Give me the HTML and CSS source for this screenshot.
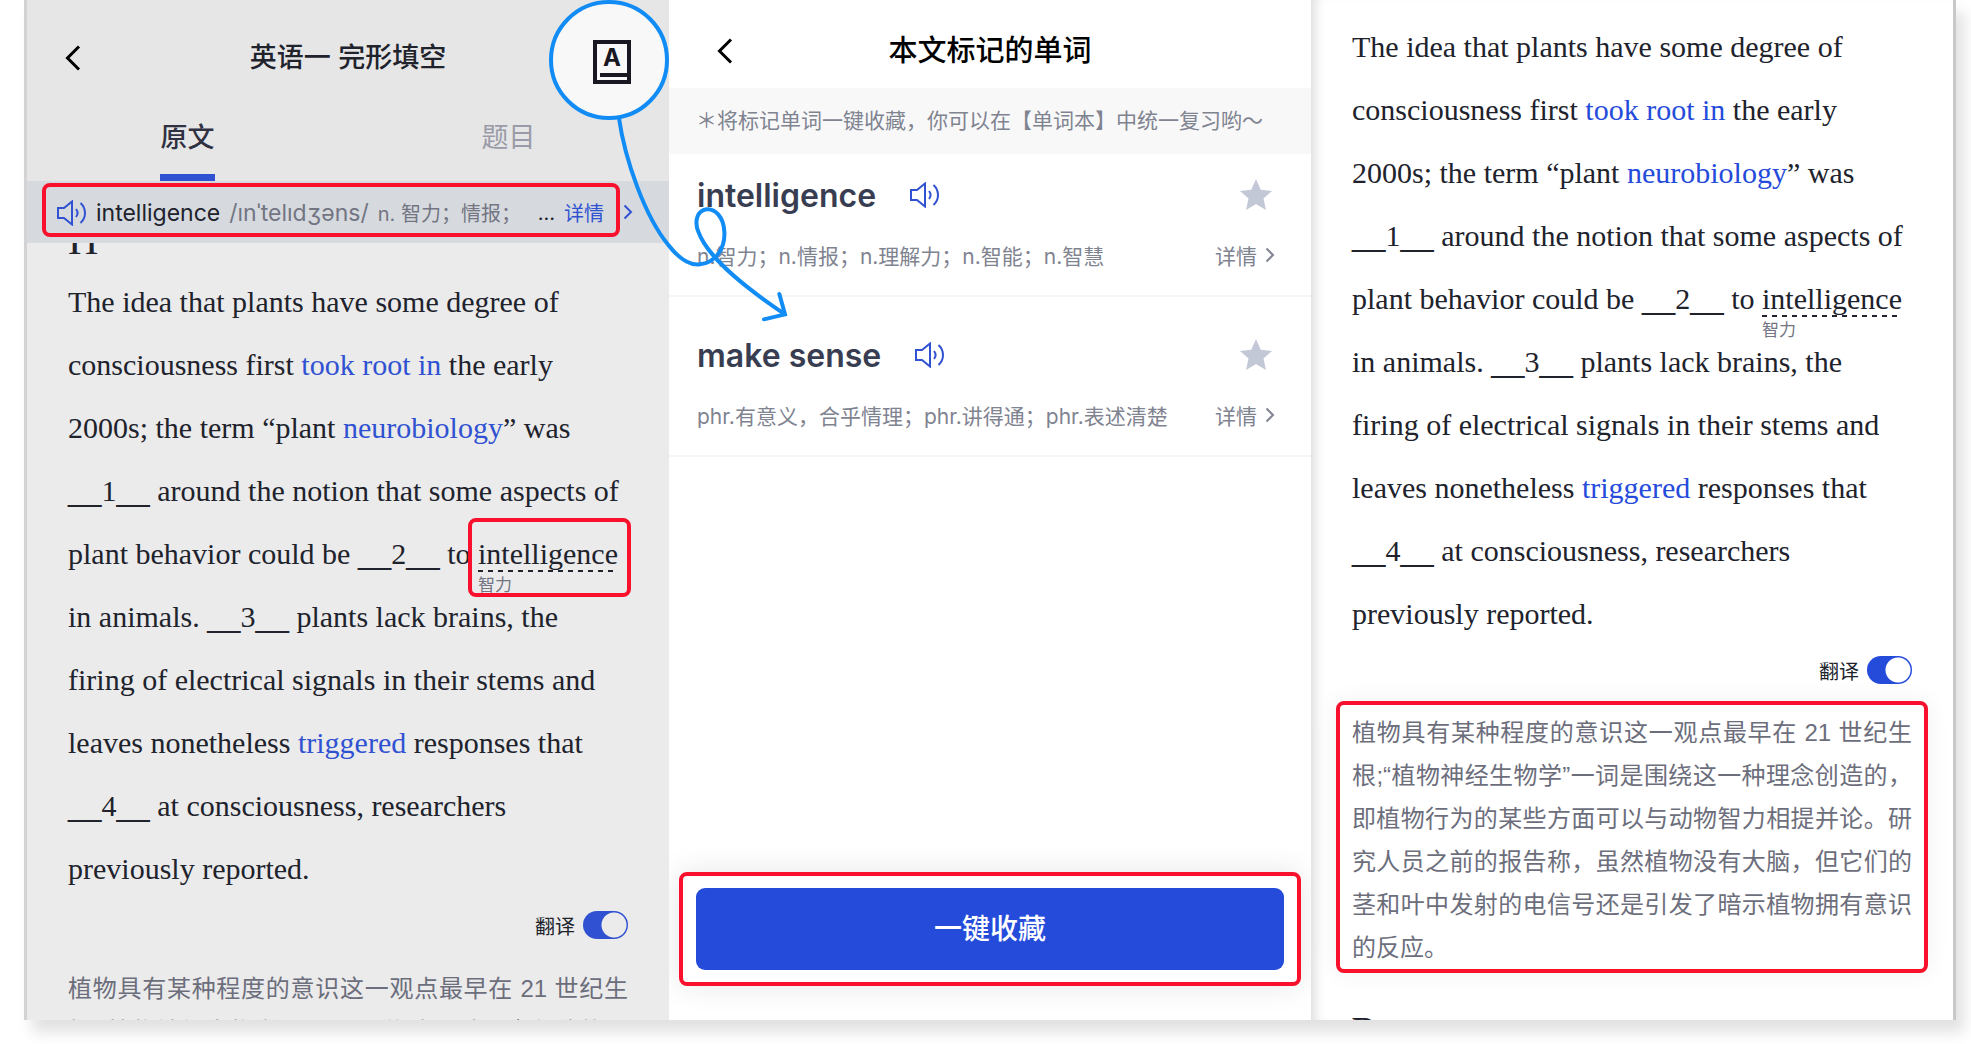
FILE: index.html
```html
<!DOCTYPE html>
<html lang="zh-CN">
<head>
  <meta charset="UTF-8" />
  <meta name="viewport" content="width=device-width, initial-scale=1.0"/>
  <title>英语一 完形填空</title>
  <link rel="stylesheet" href="styles.css">
</head>
<body>
  <!-- Shared icons -->
  <svg class="sprite" aria-hidden="true">
    <symbol id="back" viewBox="0 0 16 26"><path d="M14 1.500 2.500 13 14 24.500"/></symbol>
    <symbol id="next" viewBox="0 0 10 16"><path d="M1.500 1.500 8 8l-6.500 6.500"/></symbol>
    <symbol id="sound" viewBox="0 0 30 26"><path d="M1 8h6l8-6.500v23L7 18H1zM19 9c2 2.500 2 5.500 0 8M23.500 3c6 5.500 6 14.500 0 20"/></symbol>
    <symbol id="star" viewBox="0 0 32 32"><path d="m16 0 4.800 10.800L32 12l-8.500 7.600L26 31l-10-6-10 6 2.500-11.400L0 12l11.200-1.200z"/></symbol>
  </svg>

  <main class="board">
    <section class="panel reader">
      <header class="reader-header">
        <button class="icon-btn back" aria-label="返回"><svg><use href="#back"/></svg></button>
        <h1>英语一 完形填空</h1>
        <button class="book" aria-label="单词本">
          <svg viewBox="0 0 38 44">
            <path d="M2 2h34v40H2zM7 35h29"/>
            <text x="19" y="26">A</text>
          </svg>
        </button>
      </header>
      <nav class="tabs">
        <a class="active" href="#article">原文</a>
        <a href="#questions">题目</a>
      </nav>
      <div class="word-bar">
        <div class="frame word-frame">
          <button class="icon-btn sound" aria-label="发音"><svg><use href="#sound"/></svg></button>
          <span class="word">intelligence</span>
          <span class="phonetic">/ınˈtelıdʒəns/</span>
          <span class="meaning">n. 智力；情报；</span>
          <span class="more">…</span>
          <a href="#detail">详情</a>
        </div>
        <svg class="next"><use href="#next"/></svg>
      </div>
      <div class="scroll" id="article">
        <h2 class="cut-heading">H</h2>
        <p class="passage">The idea that plants have some degree of<br>
          consciousness first <a href="#w1">took root in</a> the early<br>
          2000s; the term “plant <a href="#w2">neurobiology</a>” was<br>
          <span class="blank">__</span>1<span class="blank">__</span> around the notion that some aspects of<br>
          plant behavior could be <span class="blank">__</span>2<span class="blank">__</span> to <span class="marked boxed">intelligence<small>智力</small></span><br>
          in animals. <span class="blank">__</span>3<span class="blank">__</span> plants lack brains, the<br>
          firing of electrical signals in their stems and<br>
          leaves nonetheless <a href="#w3">triggered</a> responses that<br>
          <span class="blank">__</span>4<span class="blank">__</span> at consciousness, researchers<br>
          previously reported.</p>
        <label class="switch">翻译 <input type="checkbox" checked></label>
        <p class="translation">植物具有某种程度的意识这一观点最早在 21 世纪生根;“植物神经生物学”一词是围绕这一种理念创造的，即植物行为的某些方面可以与动物智力相提并论。</p>
      </div>
      <svg class="arrow" viewBox="0 0 810 1020" aria-hidden="true">
        <path d="M237 355C255 480 315 650 385 735C420 780 450 797 480 793C530 788 556 740 553 695C551 650 525 626 500 628C470 632 463 665 475 695C500 765 590 845 735 943M718 882 735 943 672 958"/>
      </svg>
    </section>

    <section class="panel words">
      <header class="words-header">
        <button class="icon-btn back" aria-label="返回"><svg><use href="#back"/></svg></button>
        <h1>本文标记的单词</h1>
      </header>
      <p class="tip">＊将标记单词一键收藏，你可以在【单词本】中统一复习哟～</p>
      <ul class="word-list">
        <li>
          <div class="row">
            <h2>intelligence</h2>
            <button class="icon-btn sound" aria-label="发音"><svg><use href="#sound"/></svg></button>
            <button class="icon-btn star" aria-label="收藏"><svg><use href="#star"/></svg></button>
          </div>
          <div class="row">
            <p>n.智力；n.情报；n.理解力；n.智能；n.智慧</p>
            <a class="detail" href="#d1">详情 <svg class="next"><use href="#next"/></svg></a>
          </div>
        </li>
        <li>
          <div class="row">
            <h2>make sense</h2>
            <button class="icon-btn sound" aria-label="发音"><svg><use href="#sound"/></svg></button>
            <button class="icon-btn star" aria-label="收藏"><svg><use href="#star"/></svg></button>
          </div>
          <div class="row">
            <p>phr.有意义，合乎情理；phr.讲得通；phr.表述清楚</p>
            <a class="detail" href="#d2">详情 <svg class="next"><use href="#next"/></svg></a>
          </div>
        </li>
      </ul>
      <div class="frame collect-frame">
        <button class="collect">一键收藏</button>
      </div>
    </section>

    <section class="panel result">
      <div class="scroll">
        <p class="passage">The idea that plants have some degree of<br>
          consciousness first <a href="#w1">took root in</a> the early<br>
          2000s; the term “plant <a href="#w2">neurobiology</a>” was<br>
          <span class="blank">__</span>1<span class="blank">__</span> around the notion that some aspects of<br>
          plant behavior could be <span class="blank">__</span>2<span class="blank">__</span> to <span class="marked">intelligence<small>智力</small></span><br>
          in animals. <span class="blank">__</span>3<span class="blank">__</span> plants lack brains, the<br>
          firing of electrical signals in their stems and<br>
          leaves nonetheless <a href="#w3">triggered</a> responses that<br>
          <span class="blank">__</span>4<span class="blank">__</span> at consciousness, researchers<br>
          previously reported.</p>
        <label class="switch">翻译 <input type="checkbox" checked></label>
        <div class="frame translation-frame">
          <p class="translation">植物具有某种程度的意识这一观点最早在 21 世纪生根;“植物神经生物学”一词是围绕这一种理念创造的，即植物行为的某些方面可以与动物智力相提并论。研究人员之前的报告称，虽然植物没有大脑，但它们的茎和叶中发射的电信号还是引发了暗示植物拥有意识的反应。</p>
        </div>
        <h2 class="next-heading">B</h2>
      </div>
    </section>
  </main>
</body>
</html>
```

FILE: styles.css
```css
* {
  box-sizing: border-box;
}

body {
  margin: 0;
  height: 100vh;
  padding: 0 15px 24px 24px;
  overflow: hidden;
  background: #fff;
  color: #20222c;
  font-family: "Liberation Sans", "Noto Sans CJK SC", sans-serif;
}

h1, h2, p, ul {
  margin: 0;
  padding: 0;
}

a {
  color: #254bdb;
  text-decoration: none;
}

button {
  border: 0;
  padding: 0;
  background: none;
  font-family: inherit;
  cursor: pointer;
}

svg {
  display: block;
  fill: none;
  stroke: currentColor;
}

.sprite {
  position: absolute;
  width: 0;
  height: 0;
}

.board {
  height: 100%;
  display: grid;
  grid-template-columns: 645fr 642fr 645fr;
  box-shadow: 8px 12px 14px rgba(0, 0, 0, 0.12);
}

.panel {
  position: relative;
  min-width: 0;
  min-height: 0;
  display: flex;
  flex-direction: column;
  background: #fff;
}

.reader {
  z-index: 1;
  border-left: 3px solid #d3d3d4;
  background: #ebebeb;
}

.result {
  border-right: 3px solid #c8c8c8;
  box-shadow: inset 12px 0 12px -8px rgba(0, 0, 0, 0.14);
}

.frame {
  border: 4px solid #f8102c;
  border-radius: 8px;
}

/* Headers */
h1 {
  font-size: 27px;
  font-weight: 500;
  line-height: 36px;
  text-align: center;
}

.back svg {
  width: 16px;
  height: 26px;
  stroke-width: 3;
}

.reader-header {
  height: 115px;
  display: grid;
  grid-template-columns: 120px 1fr 120px;
  grid-template-rows: 115px;
  align-items: center;
  background: #e6e6e6;
}

.back {
  padding-left: 38px;
  justify-self: start;
}

.words-header .back {
  padding-left: 48px;
}

.book {
  position: relative;
  z-index: 1;
  align-self: start;
  width: 120px;
  height: 120px;
  padding: 4px 0 0 6px;
  display: grid;
  place-items: center;
  border: 4px solid #128cf5;
  border-radius: 50%;
  background: #f8f8f9;
}

.book svg {
  width: 38px;
  height: 44px;
  stroke: #181722;
  stroke-width: 4;
}

.book text {
  fill: #181722;
  stroke: none;
  font-family: Inter, sans-serif;
  font-size: 24px;
  font-weight: 700;
  text-anchor: middle;
}

.words-header {
  height: 88px;
  padding-top: 13px;
  display: grid;
  grid-template-columns: 120px 1fr 120px;
  align-items: center;
  color: #000;
}

.words-header h1 {
  font-size: 29px;
}

.tabs {
  height: 66px;
  display: flex;
  background: #e6e6e6;
}

.tabs a {
  flex: 1;
  display: flex;
  flex-direction: column;
  align-items: center;
  justify-content: space-between;
  font-size: 27px;
  line-height: 46px;
  color: #9a9ba8;
}

.tabs .active {
  color: #303142;
  font-weight: 500;
}

.tabs .active::after {
  content: "";
  width: 55px;
  height: 7px;
  background: #3052d2;
}

/* Word bar */
.word-bar {
  height: 62px;
  padding: 2px 36px 6px 15px;
  display: flex;
  align-items: center;
  background: #d6dade;
  color: #3052d2;
}

.word-frame {
  flex: 1;
  height: 54px;
  padding: 5px 12px 0 11px;
  display: flex;
  align-items: center;
  gap: 9px;
  font-family: Inter, "Noto Sans CJK SC", sans-serif;
  font-size: 20px;
  white-space: nowrap;
  color: #737583;
}

.word-frame .word {
  font-size: 23px;
  color: #20222c;
}

.word-frame .phonetic {
  font-size: 23px;
}

.word-frame .more {
  color: #20222c;
  margin-left: auto;
}

.word-frame a {
  color: #3052d2;
}

.word-bar .next {
  margin: 4px 0 0 3px;
}

.sound {
  color: #3052d2;
}

.sound svg {
  width: 30px;
  height: 26px;
  stroke-width: 2;
}

.next {
  width: 10px;
  height: 16px;
  stroke-width: 2;
}

/* Article */
.scroll {
  flex: 1;
  min-height: 0;
  overflow: hidden;
  padding: 0 41px;
}

.cut-heading {
  height: 30px;
  margin-top: -3px;
  font-family: "Liberation Serif", serif;
  font-size: 42px;
  font-weight: 400;
  line-height: 0;
}

.passage {
  padding-bottom: 3px;
  font-family: "Liberation Serif", "Noto Sans CJK SC", serif;
  font-size: 30px;
  line-height: 63px;
  white-space: nowrap;
}

.reader .passage a {
  color: #3052d2;
}

.blank {
  font-family: "Liberation Sans", sans-serif;
}

.marked {
  position: relative;
  display: inline-block;
  line-height: 36px;
  background: repeating-linear-gradient(90deg, #20222c 0 5px, transparent 5px 10px) left bottom / 100% 2px no-repeat;
}

.marked small {
  position: absolute;
  left: 0;
  top: 36px;
  font-family: "Noto Sans CJK SC", sans-serif;
  font-size: 17px;
  line-height: 24px;
  color: #737583;
}

.boxed::after {
  content: "";
  position: absolute;
  inset: -18px -13px -25px -10px;
  border: 4px solid #f8102c;
  border-radius: 8px;
}

.switch {
  height: 44px;
  display: flex;
  align-items: center;
  justify-content: flex-end;
  gap: 8px;
  font-size: 20px;
}

.switch input {
  appearance: none;
  width: 45px;
  height: 28px;
  margin: 0;
  border-radius: 14px;
  background: radial-gradient(circle at 31px 14px, #fff 12px, #254bdb 13px);
}

.reader .switch input {
  background: radial-gradient(circle at 31px 14px, #ebebeb 12px, #3052d2 13px);
}

.translation {
  font-size: 24px;
  line-height: 43px;
  text-align: justify;
  color: #6c6e7c;
}

.reader .translation {
  margin-top: 20px;
}

.result .scroll {
  padding: 15px 41px 0;
}

.translation-frame {
  margin: 9px -16px 0;
  padding: 6px 12px 0;
  box-shadow: 0 0 24px rgba(0, 0, 0, 0.06);
}

.next-heading {
  margin-top: 39px;
  font-family: "Liberation Serif", serif;
  font-size: 34px;
  line-height: 34px;
}

/* Marked words */
.tip {
  height: 66px;
  padding: 0 27px;
  background: #f8f8f9;
  color: #808390;
  font-size: 21px;
  line-height: 66px;
  white-space: nowrap;
}

.word-list {
  flex: 1;
  list-style: none;
}

.word-list li {
  height: 160px;
  padding: 36px 36px 0 28px;
  border-bottom: 2px solid #f6f6f7;
}

.word-list li:first-child {
  height: 143px;
  padding-top: 19px;
}

.row {
  display: flex;
  align-items: center;
  justify-content: space-between;
  height: 44px;
  white-space: nowrap;
}

.row + .row {
  margin-top: 16px;
}

.row h2 {
  margin-right: 34px;
  color: #383d52;
  font-family: Inter, sans-serif;
  font-size: 32px;
  font-weight: 600;
}

.star {
  margin: 0 3px 0 auto;
}

.star svg {
  width: 32px;
  height: 32px;
  fill: #c2c8d5;
  stroke: none;
}

.row p,
.detail {
  color: #808390;
  font-family: Inter, "Noto Sans CJK SC", sans-serif;
  font-size: 21px;
}

.detail {
  display: flex;
  align-items: center;
  gap: 8px;
}

.collect-frame {
  margin: 0 10px 34px;
  padding: 12px 13px;
  box-shadow: 0 0 30px rgba(0, 0, 0, 0.1);
}

.collect {
  width: 100%;
  height: 82px;
  padding-bottom: 4px;
  border-radius: 9px;
  background: #254bdb;
  color: #fff;
  font-size: 28px;
  font-weight: 500;
}

/* Arrow from the book button to the word list */
.arrow {
  position: absolute;
  top: 0;
  right: -141px;
  width: 270px;
  height: 340px;
  stroke: #128cf5;
  stroke-width: 12;
  stroke-linecap: round;
  pointer-events: none;
}
```
